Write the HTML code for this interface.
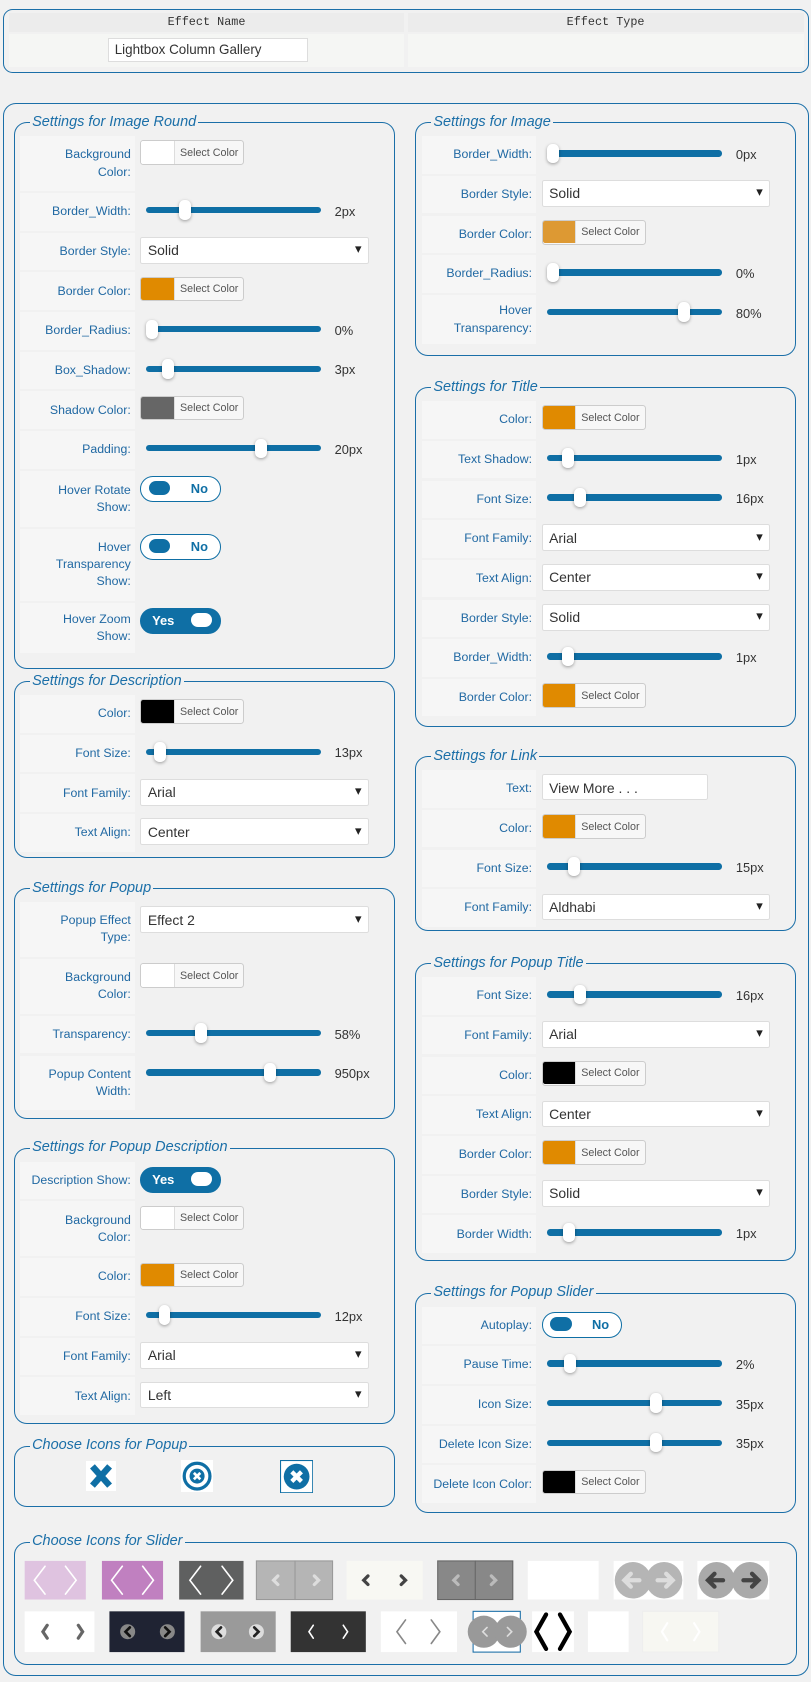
<!DOCTYPE html>
<html><head><meta charset="utf-8"><style>
body{margin:0;background:#f1f1f1;}
#w{zoom:1.0728;width:756px;height:1568px;position:relative;font-family:"Liberation Sans",sans-serif;overflow:hidden}
.box{position:absolute;border:1px solid #1b6fa8;border-radius:9px}
.fs{position:absolute;border:1px solid #1b6fa8;border-radius:12px;padding-top:12px;box-sizing:border-box}
.lg{position:absolute;top:-9px;left:14px;background:#f1f1f1;padding:0 2px;font-style:italic;color:#1b6fa8;font-size:13.5px;line-height:16px}
.row{display:flex;margin:0 0 2px 5px;width:345px}
.lb{width:107px;flex:none;background:#f6f6f6;text-align:right;padding:0 4px 0 2px;box-sizing:border-box;font-size:11.5px;line-height:16px;color:#2169a3;display:flex;align-items:center;justify-content:flex-end;min-height:35px}
.ct{padding:0 0 0 5px;flex:1;display:flex;align-items:flex-start;padding-top:5px;box-sizing:border-box}
.sl{position:relative;width:163px;height:20px;margin-left:5px;margin-top:1px}
.sl .tr{position:absolute;left:0;right:0;top:7px;height:6px;background:#0f6fa5;border-radius:3px}
.sl .th{position:absolute;top:1px;width:11px;height:18px;background:#fff;border-radius:5px;box-shadow:0 1px 3px rgba(0,0,0,.35)}
.v{font-size:12px;color:#333;margin:5px 0 0 13px}
.se{width:213px;height:25px;border:1px solid #ddd;background:#fff;border-radius:2px;box-sizing:border-box;font-size:13px;color:#333;padding:4px 6px;position:relative;margin-top:-1px}
.se:after{content:"▾";position:absolute;right:6px;top:3px;font-size:12px;color:#222}
.se.in:after{content:none}
.cb{width:97px;height:23px;border:1px solid #ccc;background:#f7f7f7;border-radius:3px;box-sizing:border-box;display:flex;font-size:10px;color:#555;margin-top:-1px}
.cb i{width:30px;height:21px;border-right:1px solid #ddd;display:block;border-radius:2px 0 0 2px}
.cb span{padding:5px 0 0 5px}
.tg{width:75px;height:24px;border:1.5px solid #0f6fa5;border-radius:12px;box-sizing:border-box;position:relative;background:#fff;font-weight:bold;font-size:12px;color:#0f6fa5}
.tg i{position:absolute;top:4px;width:20px;height:13px;border-radius:7px;background:#0f6fa5}
.tg span{position:absolute;top:4px}
.tg.y{background:#0f6fa5;color:#fff}
.tg.y i{background:#fff}
.ic{position:absolute;}
</style></head><body><div id="w">

<div class="box" style="left:3px;top:8px;width:749px;height:58px;"></div>
<div style="position:absolute;left:8px;top:12px;width:369px;height:18px;background:#ececec;font-family:'Liberation Mono',monospace;font-size:11px;color:#333;text-align:center;line-height:18px">Effect Name</div>
<div style="position:absolute;left:380px;top:12px;width:369px;height:18px;background:#ececec;font-family:'Liberation Mono',monospace;font-size:11px;color:#333;text-align:center;line-height:18px">Effect Type</div>
<div style="position:absolute;left:8px;top:32px;width:369px;height:30px;background:#f5f6f4"></div>
<div style="position:absolute;left:380px;top:32px;width:369px;height:30px;background:#f5f6f4"></div>
<div style="position:absolute;left:101px;top:35px;width:186px;height:23px;background:#fff;border:1px solid #ddd;box-sizing:border-box;font-size:12.5px;color:#333;padding:3px 5px">Lightbox Column Gallery</div>

<div class="box" style="left:3px;top:96px;width:749px;height:1464px;border-radius:12px"></div>

<!-- Image Round -->
<div class="fs" style="left:13px;top:114px;width:355px;height:510px"><div class="lg">Settings for Image Round</div>
<div class="row"><div class="lb" style="height:51px">Background<br>Color:</div><div class="ct"><div class="cb"><i style="background:#fff"></i><span>Select Color</span></div></div></div>
<div class="row"><div class="lb">Border_Width:</div><div class="ct"><div class="sl"><div class="tr"></div><div class="th" style="left:31px"></div></div><div class="v">2px</div></div></div>
<div class="row"><div class="lb">Border Style:</div><div class="ct"><div class="se">Solid</div></div></div>
<div class="row"><div class="lb">Border Color:</div><div class="ct"><div class="cb"><i style="background:#e08a00"></i><span>Select Color</span></div></div></div>
<div class="row"><div class="lb">Border_Radius:</div><div class="ct"><div class="sl"><div class="tr"></div><div class="th" style="left:0"></div></div><div class="v">0%</div></div></div>
<div class="row"><div class="lb">Box_Shadow:</div><div class="ct"><div class="sl"><div class="tr"></div><div class="th" style="left:15px"></div></div><div class="v">3px</div></div></div>
<div class="row"><div class="lb">Shadow Color:</div><div class="ct"><div class="cb"><i style="background:#666"></i><span>Select Color</span></div></div></div>
<div class="row"><div class="lb">Padding:</div><div class="ct"><div class="sl"><div class="tr"></div><div class="th" style="left:102px"></div></div><div class="v">20px</div></div></div>
<div class="row"><div class="lb" style="height:52px">Hover Rotate<br>Show:</div><div class="ct"><div class="tg"><i style="left:7px"></i><span style="left:46px">No</span></div></div></div>
<div class="row"><div class="lb" style="height:67px">Hover<br>Transparency<br>Show:</div><div class="ct"><div class="tg"><i style="left:7px"></i><span style="left:46px">No</span></div></div></div>
<div class="row"><div class="lb" style="height:47px">Hover Zoom<br>Show:</div><div class="ct"><div class="tg y"><span style="left:10px">Yes</span><i style="left:46px"></i></div></div></div>
</div>

<!-- Description -->
<div class="fs" style="left:13px;top:635px;width:355px;height:165px"><div class="lg">Settings for Description</div>
<div class="row"><div class="lb">Color:</div><div class="ct"><div class="cb"><i style="background:#000"></i><span>Select Color</span></div></div></div>
<div class="row"><div class="lb">Font Size:</div><div class="ct"><div class="sl"><div class="tr"></div><div class="th" style="left:8px"></div></div><div class="v">13px</div></div></div>
<div class="row"><div class="lb">Font Family:</div><div class="ct"><div class="se">Arial</div></div></div>
<div class="row"><div class="lb">Text Align:</div><div class="ct"><div class="se">Center</div></div></div>
</div>

<!-- Popup -->
<div class="fs" style="left:13px;top:828px;width:355px;height:215px"><div class="lg">Settings for Popup</div>
<div class="row"><div class="lb" style="height:51px">Popup Effect<br>Type:</div><div class="ct"><div class="se">Effect 2</div></div></div>
<div class="row"><div class="lb" style="height:51px">Background<br>Color:</div><div class="ct"><div class="cb"><i style="background:#fff"></i><span>Select Color</span></div></div></div>
<div class="row"><div class="lb">Transparency:</div><div class="ct"><div class="sl"><div class="tr"></div><div class="th" style="left:46px"></div></div><div class="v">58%</div></div></div>
<div class="row"><div class="lb" style="height:51px">Popup Content<br>Width:</div><div class="ct"><div class="sl"><div class="tr"></div><div class="th" style="left:110px"></div></div><div class="v">950px</div></div></div>
</div>

<!-- Popup Description -->
<div class="fs" style="left:13px;top:1070px;width:355px;height:257px"><div class="lg">Settings for Popup Description</div>
<div class="row"><div class="lb">Description Show:</div><div class="ct"><div class="tg y"><span style="left:10px">Yes</span><i style="left:46px"></i></div></div></div>
<div class="row"><div class="lb" style="height:51px">Background<br>Color:</div><div class="ct"><div class="cb"><i style="background:#fff"></i><span>Select Color</span></div></div></div>
<div class="row"><div class="lb">Color:</div><div class="ct"><div class="cb"><i style="background:#e08a00"></i><span>Select Color</span></div></div></div>
<div class="row"><div class="lb">Font Size:</div><div class="ct"><div class="sl"><div class="tr"></div><div class="th" style="left:12px"></div></div><div class="v">12px</div></div></div>
<div class="row"><div class="lb">Font Family:</div><div class="ct"><div class="se">Arial</div></div></div>
<div class="row"><div class="lb">Text Align:</div><div class="ct"><div class="se">Left</div></div></div>
</div>

<!-- Icons popup -->
<div class="fs" style="left:13px;top:1348px;width:355px;height:57px"><div class="lg">Choose Icons for Popup</div></div>
<svg class="ic" style="left:80px;top:1362px" width="28" height="28" viewBox="0 0 28 28"><rect width="28" height="28" fill="#fff"/><path d="M6 5 L22 23 M22 5 L6 23" stroke="#0f6fa5" stroke-width="6"/></svg>
<svg class="ic" style="left:169px;top:1361px" width="30" height="30" viewBox="0 0 30 30"><rect width="30" height="30" fill="#fff"/><circle cx="15" cy="15" r="12" fill="none" stroke="#0f6fa5" stroke-width="3"/><circle cx="15" cy="15" r="7" fill="#0f6fa5"/><path d="M12 12 L18 18 M18 12 L12 18" stroke="#fff" stroke-width="2.5"/></svg>
<svg class="ic" style="left:261px;top:1361px" width="31" height="31" viewBox="0 0 31 31"><rect x=".5" y=".5" width="30" height="30" fill="#fff" stroke="#0f6fa5"/><circle cx="15.5" cy="15.5" r="12" fill="#0f6fa5"/><path d="M11 11 L20 20 M20 11 L11 20" stroke="#fff" stroke-width="4"/></svg>

<!-- Right: Image -->
<div class="fs" style="left:387px;top:114px;width:355px;height:218px"><div class="lg">Settings for Image</div>
<div class="row"><div class="lb">Border_Width:</div><div class="ct"><div class="sl"><div class="tr"></div><div class="th" style="left:0"></div></div><div class="v">0px</div></div></div>
<div class="row"><div class="lb">Border Style:</div><div class="ct"><div class="se">Solid</div></div></div>
<div class="row"><div class="lb">Border Color:</div><div class="ct"><div class="cb"><i style="background:#dd9933"></i><span>Select Color</span></div></div></div>
<div class="row"><div class="lb">Border_Radius:</div><div class="ct"><div class="sl"><div class="tr"></div><div class="th" style="left:0"></div></div><div class="v">0%</div></div></div>
<div class="row"><div class="lb" style="height:46px">Hover<br>Transparency:</div><div class="ct"><div class="sl"><div class="tr"></div><div class="th" style="left:122px"></div></div><div class="v">80%</div></div></div>
</div>

<!-- Title -->
<div class="fs" style="left:387px;top:361px;width:355px;height:317px"><div class="lg">Settings for Title</div>
<div class="row"><div class="lb">Color:</div><div class="ct"><div class="cb"><i style="background:#e08a00"></i><span>Select Color</span></div></div></div>
<div class="row"><div class="lb">Text Shadow:</div><div class="ct"><div class="sl"><div class="tr"></div><div class="th" style="left:14px"></div></div><div class="v">1px</div></div></div>
<div class="row"><div class="lb">Font Size:</div><div class="ct"><div class="sl"><div class="tr"></div><div class="th" style="left:25px"></div></div><div class="v">16px</div></div></div>
<div class="row"><div class="lb">Font Family:</div><div class="ct"><div class="se">Arial</div></div></div>
<div class="row"><div class="lb">Text Align:</div><div class="ct"><div class="se">Center</div></div></div>
<div class="row"><div class="lb">Border Style:</div><div class="ct"><div class="se">Solid</div></div></div>
<div class="row"><div class="lb">Border_Width:</div><div class="ct"><div class="sl"><div class="tr"></div><div class="th" style="left:14px"></div></div><div class="v">1px</div></div></div>
<div class="row"><div class="lb">Border Color:</div><div class="ct"><div class="cb"><i style="background:#e08a00"></i><span>Select Color</span></div></div></div>
</div>

<!-- Link -->
<div class="fs" style="left:387px;top:705px;width:355px;height:163px"><div class="lg">Settings for Link</div>
<div class="row"><div class="lb">Text:</div><div class="ct"><div class="se in" style="width:155px;height:24px">View More . . .</div></div></div>
<div class="row"><div class="lb">Color:</div><div class="ct"><div class="cb"><i style="background:#e08a00"></i><span>Select Color</span></div></div></div>
<div class="row"><div class="lb">Font Size:</div><div class="ct"><div class="sl"><div class="tr"></div><div class="th" style="left:20px"></div></div><div class="v">15px</div></div></div>
<div class="row"><div class="lb">Font Family:</div><div class="ct"><div class="se">Aldhabi</div></div></div>
</div>

<!-- Popup Title -->
<div class="fs" style="left:387px;top:898px;width:355px;height:277px"><div class="lg">Settings for Popup Title</div>
<div class="row"><div class="lb">Font Size:</div><div class="ct"><div class="sl"><div class="tr"></div><div class="th" style="left:25px"></div></div><div class="v">16px</div></div></div>
<div class="row"><div class="lb">Font Family:</div><div class="ct"><div class="se">Arial</div></div></div>
<div class="row"><div class="lb">Color:</div><div class="ct"><div class="cb"><i style="background:#000"></i><span>Select Color</span></div></div></div>
<div class="row"><div class="lb">Text Align:</div><div class="ct"><div class="se">Center</div></div></div>
<div class="row"><div class="lb">Border Color:</div><div class="ct"><div class="cb"><i style="background:#e08a00"></i><span>Select Color</span></div></div></div>
<div class="row"><div class="lb">Border Style:</div><div class="ct"><div class="se">Solid</div></div></div>
<div class="row"><div class="lb">Border Width:</div><div class="ct"><div class="sl"><div class="tr"></div><div class="th" style="left:15px"></div></div><div class="v">1px</div></div></div>
</div>

<!-- Popup Slider -->
<div class="fs" style="left:387px;top:1205px;width:355px;height:205px"><div class="lg">Settings for Popup Slider</div>
<div class="row"><div class="lb">Autoplay:</div><div class="ct"><div class="tg"><i style="left:7px"></i><span style="left:46px">No</span></div></div></div>
<div class="row"><div class="lb">Pause Time:</div><div class="ct"><div class="sl"><div class="tr"></div><div class="th" style="left:16px"></div></div><div class="v">2%</div></div></div>
<div class="row"><div class="lb">Icon Size:</div><div class="ct"><div class="sl"><div class="tr"></div><div class="th" style="left:96px"></div></div><div class="v">35px</div></div></div>
<div class="row"><div class="lb">Delete Icon Size:</div><div class="ct"><div class="sl"><div class="tr"></div><div class="th" style="left:96px"></div></div><div class="v">35px</div></div></div>
<div class="row"><div class="lb">Delete Icon Color:</div><div class="ct"><div class="cb"><i style="background:#000"></i><span>Select Color</span></div></div></div>
</div>

<!-- Slider icons -->
<div class="fs" style="left:13px;top:1437px;width:730px;height:115px"><div class="lg">Choose Icons for Slider</div></div>
<svg class="ic" style="left:0;top:0" width="756" height="1568" viewBox="0 0 756 1568">
<g stroke-width="2" fill="none" stroke-linecap="round">
<rect x="23" y="1455" width="57" height="36" fill="#dfc3e0" stroke="none"/><path d="M42 1460 L32 1473 L42 1486 M61 1460 L71 1473 L61 1486" stroke="#fff" stroke-width="1.5"/>
<rect x="95" y="1455" width="57" height="36" fill="#c080c0" stroke="none"/><path d="M114 1460 L104 1473 L114 1486 M133 1460 L143 1473 L133 1486" stroke="#fff" stroke-width="1.5"/>
<rect x="167" y="1455" width="60" height="36" fill="#5f6060" stroke="none"/><path d="M187 1460 L177 1473 L187 1486 M207 1460 L217 1473 L207 1486" stroke="#fff" stroke-width="1.5"/>
<rect x="239" y="1455" width="71" height="36" fill="#b5b5b5" stroke="#999" stroke-width="1"/><path d="M275 1455 V1491" stroke="#999" stroke-width="1"/><path d="M259 1469 L255 1473 L259 1477 M293 1469 L297 1473 L293 1477" stroke="#ddd" stroke-width="3"/>
<rect x="323" y="1455" width="71" height="36" fill="#f8f8f3" stroke="none"/><path d="M343 1469 L339 1473 L343 1477 M374 1469 L378 1473 L374 1477" stroke="#444" stroke-width="3"/>
<rect x="408" y="1455" width="70" height="36" fill="#888" stroke="#666" stroke-width="1"/><path d="M443 1455 V1491" stroke="#666" stroke-width="1"/><path d="M427 1469 L423 1473 L427 1477 M458 1469 L462 1473 L458 1477" stroke="#bbb" stroke-width="3"/>
<rect x="492" y="1455" width="66" height="36" fill="#fff" stroke="none"/>
<rect x="572" y="1455" width="65" height="36" fill="#fff" stroke="none"/><circle cx="590" cy="1473" r="17" fill="#b5b5b5" stroke="none"/><circle cx="619" cy="1473" r="17" fill="#b5b5b5" stroke="none"/><path d="M596 1473 H582 M588 1467 L582 1473 L588 1479 M613 1473 H627 M621 1467 L627 1473 L621 1479" stroke="#ddd" stroke-width="4"/>
<rect x="650" y="1455" width="67" height="36" fill="#fff" stroke="none"/><circle cx="668" cy="1473" r="17" fill="#aaa" stroke="none"/><circle cx="699" cy="1473" r="17" fill="#aaa" stroke="none"/><path d="M674 1473 H660 M666 1467 L660 1473 L666 1479 M693 1473 H707 M701 1467 L707 1473 L701 1479" stroke="#444" stroke-width="4"/>
<rect x="23" y="1502" width="65" height="38" fill="#fff" stroke="none"/><path d="M44 1515 L40 1521 L44 1527 M73 1515 L77 1521 L73 1527" stroke="#666" stroke-width="3"/>
<rect x="102" y="1502" width="70" height="38" fill="#1f2333" stroke="none"/><circle cx="119" cy="1521" r="7" fill="#888" stroke="none"/><circle cx="156" cy="1521" r="7" fill="#888" stroke="none"/><path d="M121 1517 L117 1521 L121 1525 M154 1517 L158 1521 L154 1525" stroke="#111" stroke-width="2.5"/>
<rect x="187" y="1502" width="70" height="38" fill="#9a9a9a" stroke="none"/><circle cx="204" cy="1521" r="7" fill="#ddd" stroke="none"/><circle cx="239" cy="1521" r="7" fill="#ddd" stroke="none"/><path d="M206 1517 L202 1521 L206 1525 M237 1517 L241 1521 L237 1525" stroke="#222" stroke-width="2.5"/>
<rect x="271" y="1502" width="70" height="38" fill="#333" stroke="none"/><path d="M292 1515 L288 1521 L292 1527 M320 1515 L324 1521 L320 1527" stroke="#fff" stroke-width="1.5"/>
<rect x="355" y="1502" width="71" height="38" fill="#fff" stroke="none"/><path d="M378 1510 L370 1521 L378 1532 M402 1510 L410 1521 L402 1532" stroke="#888" stroke-width="1.5"/>
<rect x="441" y="1502" width="44" height="38" fill="#fff" stroke="#1b6fa8" stroke-width="1"/><circle cx="451" cy="1521" r="15" fill="#999" stroke="none"/><circle cx="476" cy="1521" r="15" fill="#999" stroke="none"/><path d="M454 1517 L450 1521 L454 1525 M473 1517 L477 1521 L473 1525" stroke="#ddd" stroke-width="1.5"/>
<rect x="496" y="1502" width="39" height="38" fill="#fff" stroke="none"/><path d="M509 1505 L500 1521 L509 1537 M522 1505 L531 1521 L522 1537" stroke="#000" stroke-width="4"/>
<rect x="548" y="1502" width="38" height="38" fill="#fff" stroke="none"/>
<rect x="599" y="1502" width="71" height="38" fill="#f7f7f2" stroke="#eee" stroke-width="1"/><path d="M622 1513 L617 1521 L622 1529 M647 1513 L652 1521 L647 1529" stroke="#fff" stroke-width="2"/>
</g></svg>

</div></body></html>
